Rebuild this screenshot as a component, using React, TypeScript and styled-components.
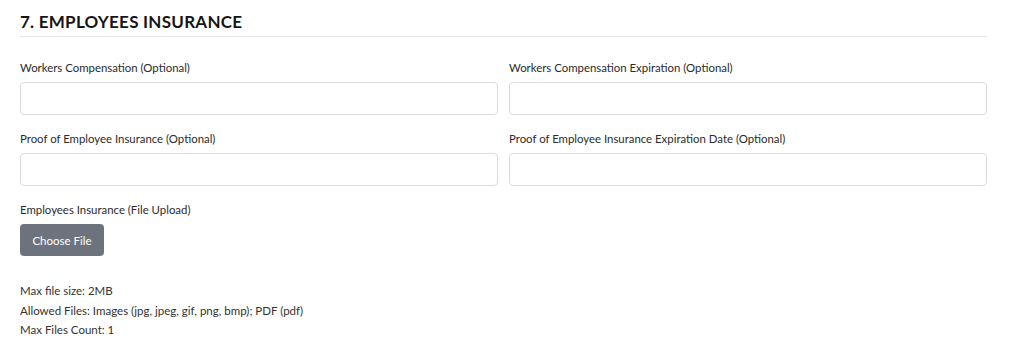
import React from "react";
import styled, { createGlobalStyle } from "styled-components";

const Global = createGlobalStyle`
  html, body { margin: 0; padding: 0; background: #fff; }
  body { font-family: "Lato", "Open Sans", sans-serif; color: #333; }
  * { box-sizing: border-box; }
`;

const Section = styled.section`
  width: 967px;
  margin-left: 20px;
  padding-top: 10px;
`;

const Heading = styled.h2`
  margin: 0;
  font-size: 17px;
  line-height: 24px;
  font-weight: 700;
  color: #151515;
  letter-spacing: 0.25px;
  padding-bottom: 2px;
  border-bottom: 1px solid #e6e6e6;
`;

const Grid = styled.div`
  display: grid;
  grid-template-columns: 1fr 1fr;
  column-gap: 11px;
  row-gap: 16px;
  margin-top: 23px;
`;

const Field = styled.div`
  display: flex;
  flex-direction: column;
  gap: 6px;
`;

const Label = styled.label`
  font-size: 11.4px;
  line-height: 16px;
  color: #2b2b2b;
`;

const Input = styled.input`
  height: 33px;
  width: 100%;
  border: 1px solid #dcdcdc;
  border-radius: 4px;
  background: #fff;
  font: inherit;
  padding: 0 10px;
  outline: none;
`;

const UploadField = styled(Field)`
  margin-top: 16px;
  align-items: flex-start;
`;

const ChooseButton = styled.button`
  height: 32px;
  width: 84px;
  border: none;
  border-radius: 4px;
  background: #6c737c;
  color: #fff;
  font-family: inherit;
  font-size: 11.5px;
  cursor: pointer;
`;

const Notes = styled.div`
  margin-top: 25px;
  display: flex;
  flex-direction: column;
`;

const Note = styled.div`
  font-size: 11.5px;
  line-height: 19.5px;
  color: #333;
`;

export default function App() {
  return (
    <>
      <Global />
      <Section>
        <Heading>7. EMPLOYEES INSURANCE</Heading>
        <Grid>
          <Field>
            <Label>Workers Compensation (Optional)</Label>
            <Input />
          </Field>
          <Field>
            <Label>Workers Compensation Expiration (Optional)</Label>
            <Input />
          </Field>
          <Field>
            <Label>Proof of Employee Insurance (Optional)</Label>
            <Input />
          </Field>
          <Field>
            <Label>Proof of Employee Insurance Expiration Date (Optional)</Label>
            <Input />
          </Field>
        </Grid>
        <UploadField>
          <Label>Employees Insurance (File Upload)</Label>
          <ChooseButton type="button">Choose File</ChooseButton>
        </UploadField>
        <Notes>
          <Note>Max file size: 2MB</Note>
          <Note>Allowed Files: Images (jpg, jpeg, gif, png, bmp); PDF (pdf)</Note>
          <Note>Max Files Count: 1</Note>
        </Notes>
      </Section>
    </>
  );
}
